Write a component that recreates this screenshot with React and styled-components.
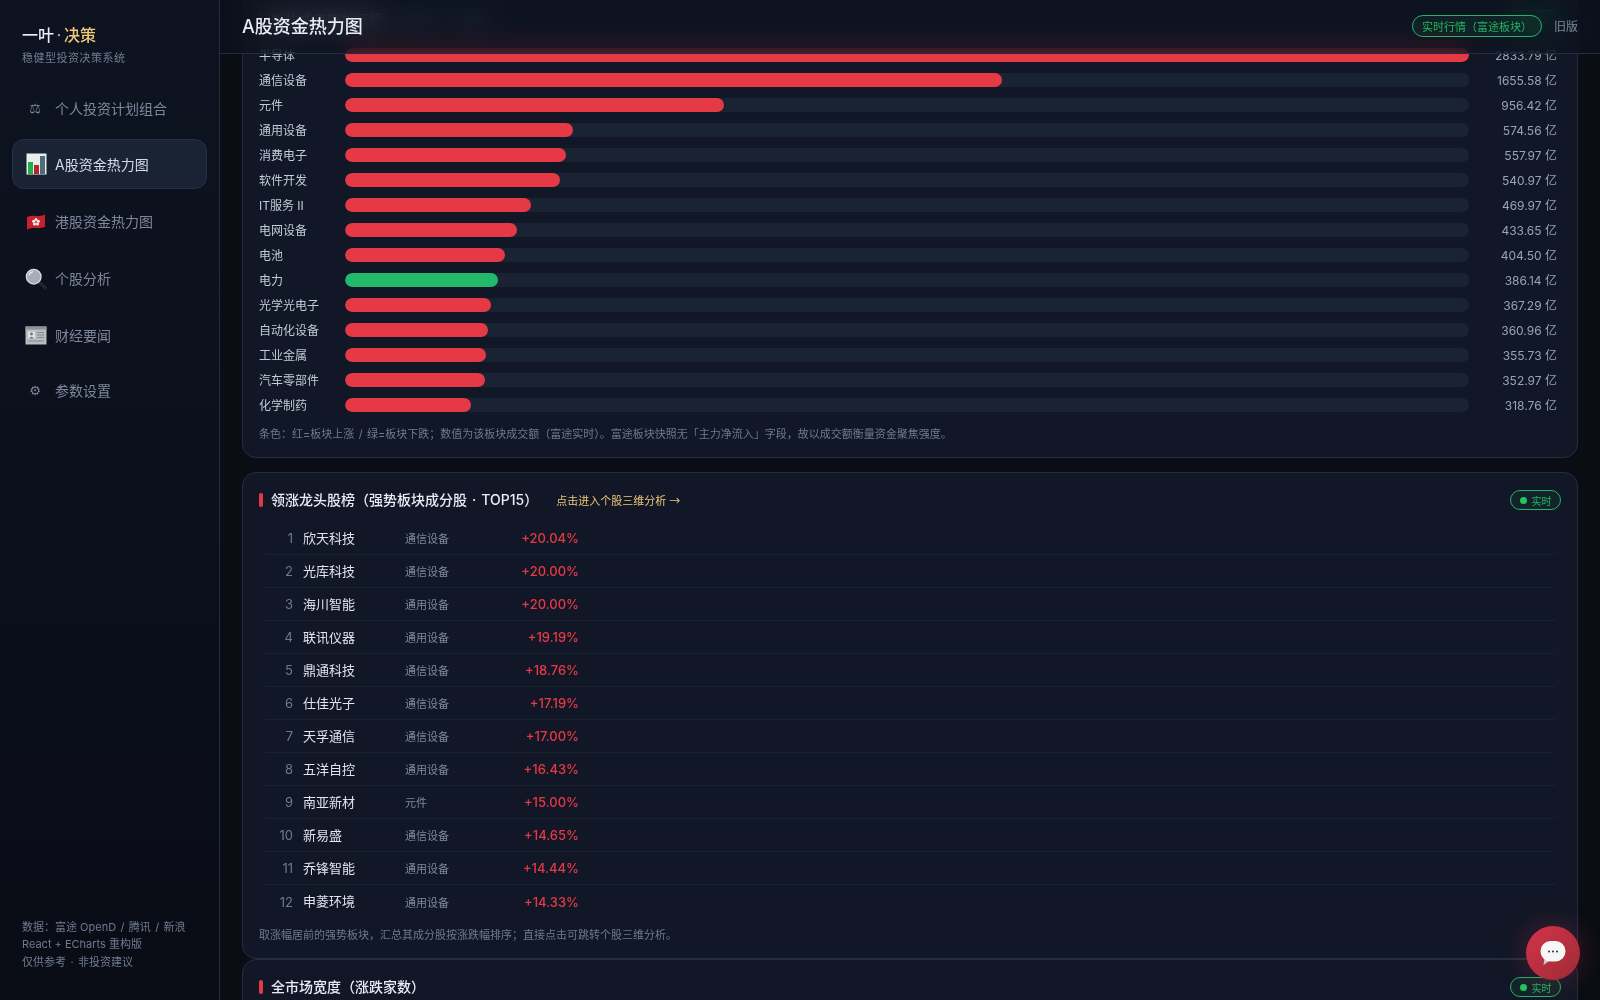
import React, { useLayoutEffect, useRef } from 'react';
import styled, { createGlobalStyle } from 'styled-components';

const sectors = [
    ['半导体', 2833.79], ['通信设备', 1655.58], ['元件', 956.42], ['通用设备', 574.56],
    ['消费电子', 557.97], ['软件开发', 540.97], ['IT服务 II', 469.97], ['电网设备', 433.65],
    ['电池', 404.5], ['电力', 386.14, true], ['光学光电子', 367.29], ['自动化设备', 360.96],
    ['工业金属', 355.73], ['汽车零部件', 352.97], ['化学制药', 318.76],
];

const leaders = [
    ['欣天科技', '通信设备', '+20.04%'], ['光库科技', '通信设备', '+20.00%'],
    ['海川智能', '通用设备', '+20.00%'], ['联讯仪器', '通用设备', '+19.19%'],
    ['鼎通科技', '通信设备', '+18.76%'], ['仕佳光子', '通信设备', '+17.19%'],
    ['天孚通信', '通信设备', '+17.00%'], ['五洋自控', '通用设备', '+16.43%'],
    ['南亚新材', '元件', '+15.00%'], ['新易盛', '通信设备', '+14.65%'],
    ['乔锋智能', '通用设备', '+14.44%'], ['申菱环境', '通用设备', '+14.33%'],
];

const ChartIcon = () => (
    <svg width="21" height="22" viewBox="0 0 21 22">
        <rect x="0.5" y="0.5" width="20" height="21" fill="#e9edee" />
        <rect x="2" y="9" width="5" height="12" fill="#21b04b" />
        <rect x="8" y="12" width="5" height="9" fill="#b3262e" />
        <rect x="14" y="3" width="5" height="18" fill="#4d7078" />
    </svg>
);

const FlagIcon = () => (
    <svg width="20" height="18" viewBox="0 0 20 18">
        <path d="M1 4 Q6 2.4 10 3 T19 1.5 V14 Q14 15.6 10 15 T1 16.5 Z" fill="#c8202f" />
        <g fill="#f8eeee">
            <circle cx="10" cy="6.6" r="1.5" />
            <circle cx="12.4" cy="8.3" r="1.5" />
            <circle cx="11.5" cy="11" r="1.5" />
            <circle cx="8.5" cy="11" r="1.5" />
            <circle cx="7.6" cy="8.3" r="1.5" />
        </g>
        <circle cx="10" cy="9.1" r="0.9" fill="#d8626a" />
    </svg>
);

const SearchIcon = () => (
    <svg width="22" height="22" viewBox="0 0 24 24">
        <path d="M14.5 14.5 L22 21.5" stroke="#23262b" strokeWidth="3.4" strokeLinecap="round" />
        <circle cx="9.5" cy="9.5" r="8" fill="#a7adb8" stroke="#d9dce1" strokeWidth="1.4" />
        <path d="M4.5 8 A5.5 5.5 0 0 1 9 4" fill="none" stroke="#e9ebee" strokeWidth="1.2" />
    </svg>
);

const NewsIcon = () => (
    <svg width="22" height="19" viewBox="0 0 22 19">
        <rect x="0.5" y="0.5" width="21" height="18" fill="#b9bcc0" />
        <rect x="0.5" y="0.5" width="21" height="3" fill="#8d9297" />
        <rect x="3" y="5.5" width="7" height="7" fill="#dfe1e3" />
        <circle cx="6.5" cy="8" r="1.4" fill="#6e7378" />
        <path d="M4 12.5 Q6.5 9 9 12.5 Z" fill="#6e7378" />
        <path d="M12 6.5h7M12 9h7M12 11.5h7M3 15h16" stroke="#7f8489" strokeWidth="0.9" />
    </svg>
);

const BubbleIcon = () => (
    <svg width="26" height="26" viewBox="0 0 26 26">
        <path d="M3.5 25 L4.5 17 L10 20.5 Z" fill="#c9cbce" />
        <rect x="0.5" y="1" width="25" height="20.5" rx="10" fill="#f6f6f7" />
        <circle cx="9" cy="11.5" r="1" fill="#2c2f36" />
        <circle cx="13" cy="11.5" r="1" fill="#2c2f36" />
        <circle cx="17" cy="11.5" r="1" fill="#2c2f36" />
    </svg>
);

const navItems = [
    { label: '个人投资计划组合', glyph: '⚖' },
    { label: 'A股资金热力图', icon: <ChartIcon />, active: true },
    { label: '港股资金热力图', icon: <FlagIcon /> },
    { label: '个股分析', icon: <SearchIcon /> },
    { label: '财经要闻', icon: <NewsIcon /> },
    { label: '参数设置', glyph: '⚙' },
];

export default function App() {
    const scroller = useRef(null);

    // the shot is taken part way down the page, with the first card under the header
    useLayoutEffect(() => {
        scroller.current.scrollTop = 82;
    }, []);

    return (
        <>
            <GlobalStyle />
            <Shell>
                <Sidebar>
                    <Brand>
                        <BrandName>一叶<BrandDot>·</BrandDot><BrandGold>决策</BrandGold></BrandName>
                        <BrandSub>稳健型投资决策系统</BrandSub>
                    </Brand>
                    <Nav>
                        {navItems.map(item => (
                            <NavItem key={item.label} $active={item.active} $tall={!!item.icon}>
                                <NavIcon $glyph={!!item.glyph}>{item.icon || item.glyph}</NavIcon>
                                <NavLabel $active={item.active}>{item.label}</NavLabel>
                            </NavItem>
                        ))}
                    </Nav>
                    <SideFooter>
                        <div>数据：富途 OpenD <Sep>/</Sep> 腾讯 <Sep>/</Sep> 新浪</div>
                        <div>React + ECharts 重构版</div>
                        <div>仅供参考 <Sep>·</Sep> 非投资建议</div>
                    </SideFooter>
                </Sidebar>

                <Main ref={scroller}>
                    <Header>
                        <PageTitle>A股资金热力图</PageTitle>
                        <HeaderRight>
                            <SourceTag>实时行情（富途板块）</SourceTag>
                            <OldLink>旧版</OldLink>
                        </HeaderRight>
                    </Header>

                    <Content>
                        <Card>
                            <CardHead>
                                <Marker />
                                <CardTitle>板块成交额排行榜</CardTitle>
                                <HeadNote>富途实时 成交额</HeadNote>
                                <LiveTag><LiveDot />实时</LiveTag>
                            </CardHead>
                            <BarList>
                                {sectors.map(([name, value, down]) => (
                                    <BarRow key={name}>
                                        <BarLabel>{name}</BarLabel>
                                        <BarTrack>
                                            <BarFill $down={down} style={{ width: `${value / sectors[0][1] * 100}%` }} />
                                        </BarTrack>
                                        <BarValue>{value.toFixed(2)} 亿</BarValue>
                                    </BarRow>
                                ))}
                            </BarList>
                            <Note>条色：红=板块上涨 <Sep>/</Sep> 绿=板块下跌；数值为该板块成交额（富途实时）。富途板块快照无「主力净流入」字段，故以成交额衡量资金聚焦强度。</Note>
                        </Card>

                        <CardGroup>
                            <Card>
                                <CardHead>
                                    <Marker />
                                    <CardTitle>领涨龙头股榜（强势板块成分股 <Sep>·</Sep> TOP15）</CardTitle>
                                    <GoldLink>点击进入个股三维分析 <Arrow>→</Arrow></GoldLink>
                                    <LiveTag><LiveDot />实时</LiveTag>
                                </CardHead>
                                <StockList>
                                    {leaders.map(([name, sector, pct], i) => (
                                        <StockRow key={name}>
                                            <Rank>{i + 1}</Rank>
                                            <StockName>{name}</StockName>
                                            <StockSector>{sector}</StockSector>
                                            <StockPct>{pct}</StockPct>
                                        </StockRow>
                                    ))}
                                </StockList>
                                <Note>取涨幅居前的强势板块，汇总其成分股按涨跌幅排序；直接点击可跳转个股三维分析。</Note>
                            </Card>
                            <BreadthCard>
                                <CardHead>
                                    <Marker />
                                    <CardTitle>全市场宽度（涨跌家数）</CardTitle>
                                    <LiveTag><LiveDot />实时</LiveTag>
                                </CardHead>
                            </BreadthCard>
                        </CardGroup>
                    </Content>
                </Main>

                <ChatButton><BubbleIcon /></ChatButton>
            </Shell>
        </>
    );
}

const GlobalStyle = createGlobalStyle`
    html, body {
        margin: 0;
        height: 100%;
        background: #0a0d14;
        font-family: Inter, "Noto Sans CJK SC", sans-serif;
    }
    * { box-sizing: border-box; }
`;

const Shell = styled.div`
    display: flex;
    height: 100vh;
    overflow: hidden;
`;

const Sidebar = styled.aside`
    width: 220px;
    flex: none;
    display: flex;
    flex-direction: column;
    background: linear-gradient(180deg, #0e1321 0%, #090c15 100%);
    border-right: 1px solid #232d42;
`;

const Brand = styled.div`
    padding: 24px 22px 0;
`;

const BrandName = styled.div`
    font-size: 16px;
    font-weight: 500;
    line-height: 22px;
    color: #e8ecf4;
`;

const BrandDot = styled.span`
    color: #9aa3b5;
    margin: 0 2.5px;
`;

const BrandGold = styled.span`
    color: #f0c878;
`;

const BrandSub = styled.div`
    margin-top: 4px;
    font-size: 11px;
    line-height: 16px;
    letter-spacing: 0.5px;
    color: #6f7a8f;
`;

const Nav = styled.nav`
    margin-top: 20px;
    padding: 0 12px;
    display: flex;
    flex-direction: column;
    gap: 8px;
`;

const NavItem = styled.div`
    height: ${p => (p.$active ? '50px' : p.$tall ? '49px' : '45px')};
    padding: 0 12px;
    display: flex;
    align-items: center;
    gap: 8px;
    font-size: 14px;
    border-radius: 12px;
    border: 1px solid ${p => (p.$active ? '#263148' : 'transparent')};
    background: ${p => (p.$active ? '#1a2333' : 'transparent')};
    color: ${p => (p.$active ? '#d5dbe6' : '#7d889c')};
`;

const NavIcon = styled.span`
    width: 22px;
    flex: none;
    display: flex;
    justify-content: center;
    align-items: center;
    font-family: "DejaVu Sans", sans-serif;
    font-size: 13px;
    color: ${p => (p.$glyph ? '#7d889c' : 'inherit')};
    transform: ${p => (p.$glyph ? 'translateX(-1px)' : 'none')};
`;

const NavLabel = styled.span`
    padding-bottom: ${p => (p.$active ? '0' : '2px')};
`;

const SideFooter = styled.footer`
    margin-top: auto;
    padding: 0 22px 29px;
    font-size: 11px;
    line-height: 17.5px;
    color: #6f7a8f;
`;

// separators sit a little wider than the latin font sets them
const Sep = styled.span`
    margin: 0 1.3px;
`;

const Main = styled.main`
    flex: 1;
    min-width: 0;
    overflow-y: auto;
    scrollbar-width: none;
    background: #0a0d14;
`;

const Header = styled.header`
    position: sticky;
    top: 0;
    z-index: 5;
    height: 54px;
    padding: 0 22px 2px;
    display: flex;
    align-items: center;
    justify-content: space-between;
    background: rgba(13, 17, 28, 0.62);
    backdrop-filter: blur(12px) saturate(1.4);
    border-bottom: 1px solid #232d42;
`;

const PageTitle = styled.h1`
    margin: 0;
    padding-bottom: 2px;
    font-size: 18px;
    font-weight: 500;
    color: #e8ecf4;
`;

const HeaderRight = styled.div`
    display: flex;
    align-items: center;
    gap: 12px;
`;

const SourceTag = styled.span`
    height: 22px;
    padding: 0 9px;
    display: flex;
    align-items: center;
    font-size: 11px;
    color: #22b566;
    border: 1px solid #22b566;
    border-radius: 11px;
    background: rgba(34, 197, 94, 0.08);
`;

const OldLink = styled.span`
    font-size: 12px;
    color: #7d889c;
`;

const Content = styled.div`
    padding: 20px 22px 40px;
    display: flex;
    flex-direction: column;
    gap: 14px;
`;

const CardGroup = styled.div`
    display: flex;
    flex-direction: column;
`;

const Card = styled.section`
    padding: 16px 16px 14px;
    background: #111726;
    border: 1px solid #232d42;
    border-radius: 14px;
`;

const BreadthCard = styled(Card)`
    min-height: 260px;
`;

const CardHead = styled.div`
    height: 22px;
    margin-bottom: 11px;
    display: flex;
    align-items: center;
`;

const Marker = styled.i`
    width: 4px;
    height: 14px;
    margin-right: 8px;
    border-radius: 2px;
    background: #e63946;
`;

const CardTitle = styled.h2`
    margin: 0;
    padding-bottom: 2px;
    font-size: 14px;
    font-weight: 500;
    color: #e8ecf4;
`;

const HeadNote = styled.span`
    margin-left: 14px;
    font-size: 11px;
    word-spacing: 10px;
    color: #7d889c;
`;

const GoldLink = styled.span`
    margin-left: 18px;
    font-size: 11px;
    color: #f0c878;
`;

const Arrow = styled.span`
    font-family: "Noto Sans CJK SC", sans-serif;
`;

const LiveTag = styled.span`
    margin-left: auto;
    height: 20px;
    padding: 0 8.5px;
    display: flex;
    align-items: center;
    gap: 5px;
    font-size: 10px;
    color: #22b566;
    border: 1px solid #22b566;
    border-radius: 10px;
    background: rgba(34, 197, 94, 0.08);
`;

const LiveDot = styled.i`
    width: 7px;
    height: 7px;
    border-radius: 50%;
    background: #22c55e;
`;

const BarList = styled.div`
    margin-right: 4px;
`;

const BarRow = styled.div`
    height: 25px;
    display: grid;
    grid-template-columns: 74px 1fr 76px;
    column-gap: 12px;
    align-items: center;
`;

const BarLabel = styled.span`
    font-size: 12px;
    color: #c3cad8;
    white-space: nowrap;
`;

const BarTrack = styled.div`
    height: 14px;
    border-radius: 7px;
    background: #1a2333;
    overflow: hidden;
`;

const BarFill = styled.div`
    height: 100%;
    border-radius: 7px;
    background: ${p => (p.$down ? '#22b96a' : '#e63946')};
`;

const BarValue = styled.span`
    font-size: 12px;
    text-align: right;
    color: #9aa3b5;
    white-space: nowrap;
`;

const Note = styled.p`
    margin: 8px 0 0;
    font-size: 11px;
    line-height: 18px;
    color: #6f7a8f;
`;

const StockList = styled.div`
    margin: 0 2px 3px 0;
`;

const StockRow = styled.div`
    height: 33px;
    display: grid;
    grid-template-columns: 34px 112px 90px 84px;
    align-items: center;
    border-bottom: 1px solid #1a2230;
    border-radius: 8px;

    &:last-child {
        border-bottom: none;
    }
`;

const Rank = styled.span`
    font-size: 13px;
    text-align: right;
    color: #6f7a8f;
`;

const StockName = styled.span`
    margin-left: 10px;
    padding-bottom: 2px;
    font-size: 13px;
    color: #dfe4ee;
`;

const StockSector = styled.span`
    font-size: 11px;
    color: #7d889c;
`;

const StockPct = styled.span`
    font-size: 13px;
    font-weight: 500;
    text-align: right;
    color: #e63946;
`;

const ChatButton = styled.button`
    position: fixed;
    right: 20px;
    bottom: 20px;
    width: 54px;
    height: 54px;
    padding: 0;
    display: flex;
    align-items: center;
    justify-content: center;
    border: none;
    border-radius: 50%;
    background: linear-gradient(135deg, #d5334a 0%, #9c2b35 100%);
    box-shadow: 0 0 28px rgba(230, 57, 70, 0.28);
    z-index: 10;
`;
